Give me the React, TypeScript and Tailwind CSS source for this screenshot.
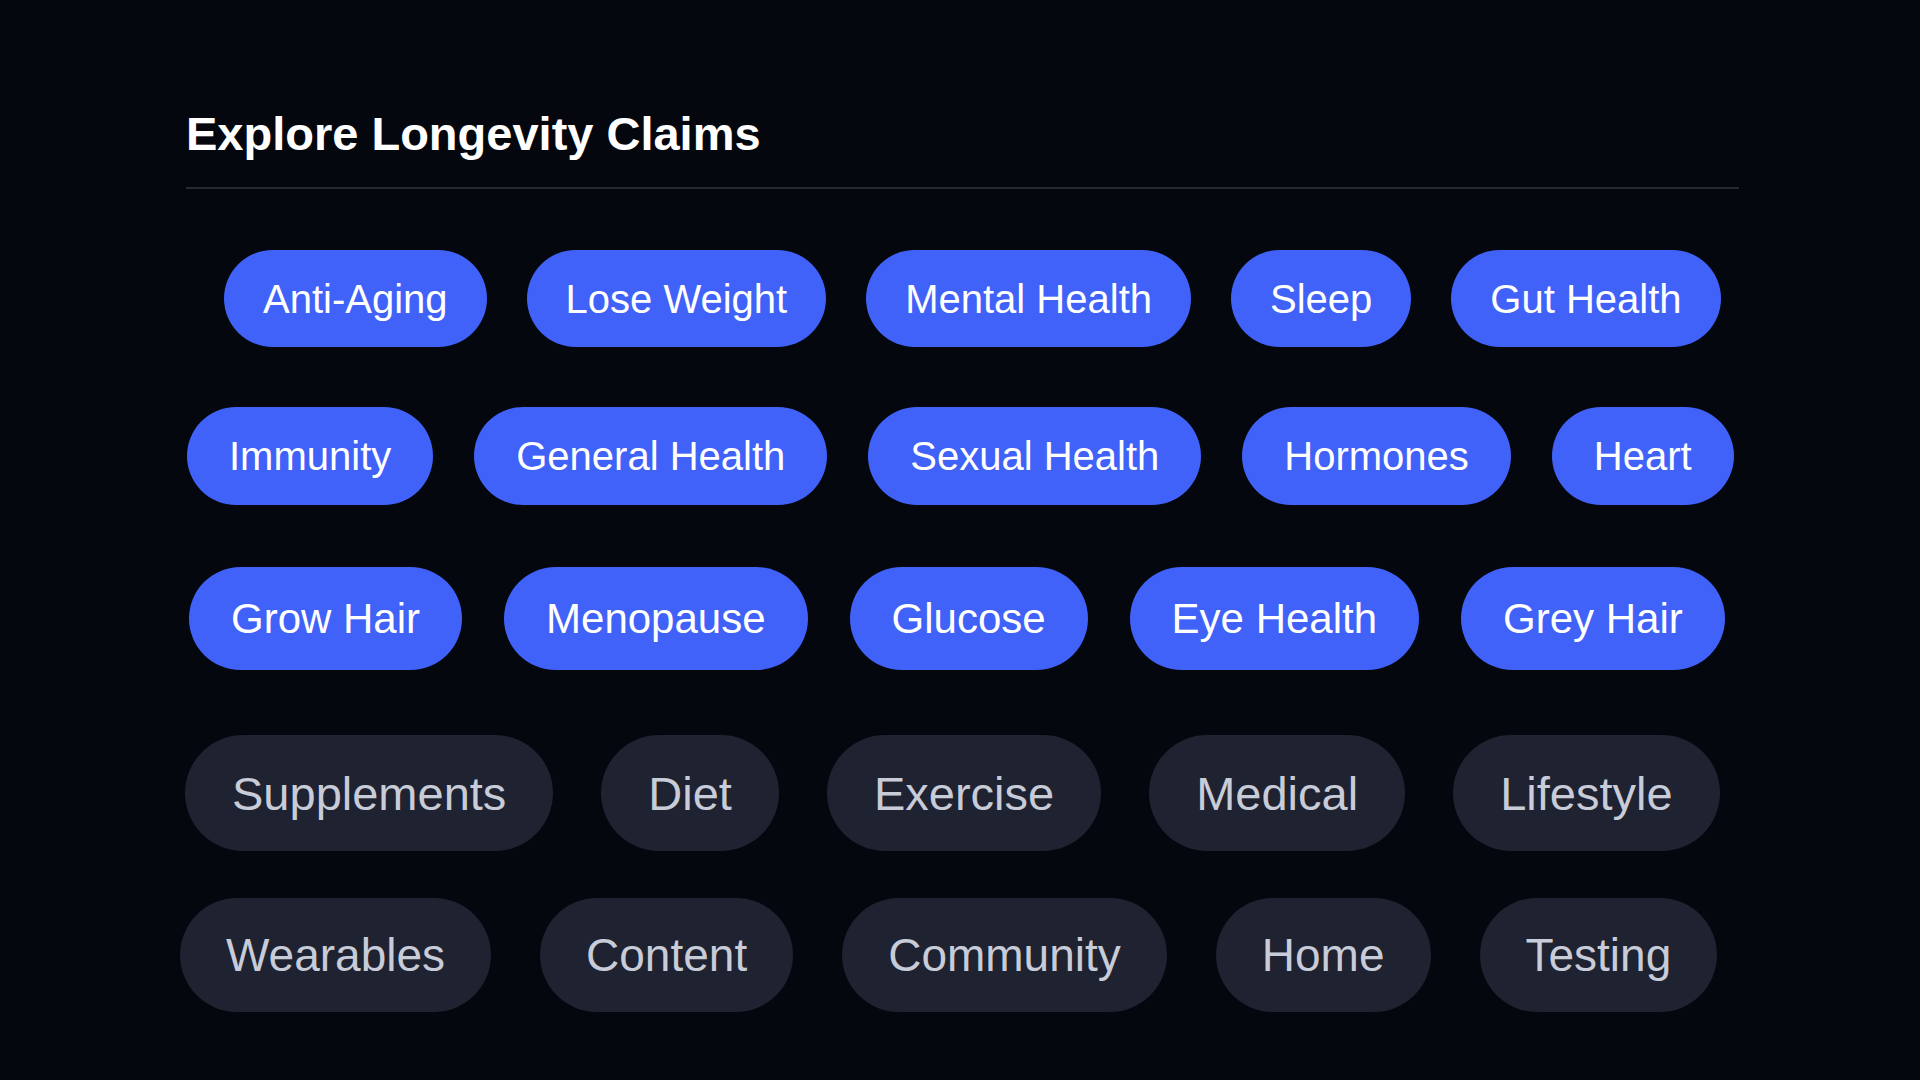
const rows = [
  {
    tone: 'blue',
    cls: 'mt-[61px] ml-[38px] gap-[40px]',
    pill: 'h-[97px] px-[39px] text-[40px]',
    items: ['Anti-Aging', 'Lose Weight', 'Mental Health', 'Sleep', 'Gut Health'],
  },
  {
    tone: 'blue',
    cls: 'mt-[60px] ml-[1px] gap-[41px]',
    pill: 'h-[98px] px-[42px] text-[40px]',
    items: ['Immunity', 'General Health', 'Sexual Health', 'Hormones', 'Heart'],
  },
  {
    tone: 'blue',
    cls: 'mt-[62px] ml-[3px] gap-[42px]',
    pill: 'h-[103px] px-[42px] text-[42px]',
    items: ['Grow Hair', 'Menopause', 'Glucose', 'Eye Health', 'Grey Hair'],
  },
  {
    tone: 'gray',
    cls: 'mt-[65px] -ml-[1px] gap-[48px]',
    pill: 'h-[116px] px-[47px] text-[47px]',
    items: ['Supplements', 'Diet', 'Exercise', 'Medical', 'Lifestyle'],
  },
  {
    tone: 'gray',
    cls: 'mt-[47px] -ml-[6px] gap-[49px]',
    pill: 'h-[114px] px-[46px] text-[46px]',
    items: ['Wearables', 'Content', 'Community', 'Home', 'Testing'],
  },
]

const toneClasses: Record<string, string> = {
  blue: 'bg-[#4062f9] text-white',
  gray: 'bg-[#1f2230] text-[#c8cbd8]',
}

export default function App() {
  return (
    <div
      className="min-h-screen w-full bg-[#04070d] pl-[186px]"
      style={{ fontFamily: '"Liberation Sans", Arial, sans-serif' }}
    >
      <div className="w-[1553px] pt-[110px]">
        <h1 className="text-[47px] font-bold leading-none text-white">Explore Longevity Claims</h1>
        <div className="mt-[30px] h-[2px] bg-[#262a33]" />

        {rows.map((row, i) => (
          <div key={i} className={`flex ${row.cls}`}>
            {row.items.map((label) => (
              <button
                key={label}
                className={`flex items-center rounded-full leading-none whitespace-nowrap ${row.pill} ${toneClasses[row.tone]}`}
              >
                {label}
              </button>
            ))}
          </div>
        ))}
      </div>
    </div>
  )
}
